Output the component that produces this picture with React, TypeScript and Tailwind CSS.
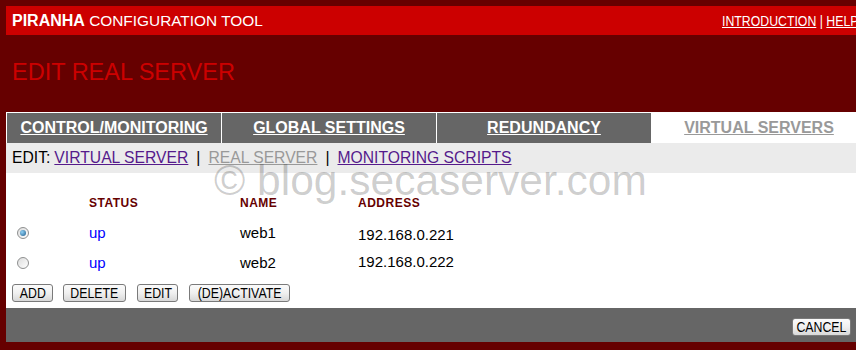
import React from "react";

function Radio({ checked }: { checked?: boolean }) {
  return (
    <span className="flex h-[12px] w-[12px] items-center justify-center rounded-full border border-[#8e8f8f] bg-linear-to-br from-[#dcdcdc] to-[#ffffff]">
      {checked && (
        <span className="h-[6px] w-[6px] rounded-full bg-[radial-gradient(circle_at_35%_35%,#8fd0f5,#1f5d8c)]" />
      )}
    </span>
  );
}

function Btn({ label, w, cls }: { label: string; w: string; cls?: string }) {
  return (
    <button
      className={`flex h-[18px] items-center justify-center overflow-hidden whitespace-nowrap rounded-[3px] border border-[#7a7a7a] bg-linear-to-b from-[#fbfbfb] via-[#f0f0f0] to-[#d8d8d8] text-[14px] leading-none text-black ${w} ${cls ?? ""}`}
    >
      <span className="inline-block scale-x-[0.88]">{label}</span>
    </button>
  );
}

export default function App() {
  const rows = [
    { checked: true, status: "up", name: "web1", addr: "192.168.0.221", addrCls: "pt-[5px]" },
    { checked: false, status: "up", name: "web2", addr: "192.168.0.222", addrCls: "pb-[2px]" },
  ];
  return (
    <div className="relative h-[350px] w-[856px] overflow-hidden bg-[#660000] pl-[6px] pt-[6px] font-['Liberation_Sans',Arial,sans-serif]">
      {/* header bar */}
      <div className="flex h-[29px] items-center overflow-hidden bg-[#cc0000] text-white">
        <div className="w-[716px] shrink-0 whitespace-nowrap pl-[6px] text-[16px] leading-none">
          <span className="font-bold">PIRANHA</span>
          <span className="text-[15.4px]"> CONFIGURATION TOOL</span>
        </div>
        <div className="shrink-0 origin-left scale-x-[0.82] whitespace-nowrap text-[15px] leading-none">
          <span className="underline">INTRODUCTION</span>
          <span> | </span>
          <span className="underline">HELP</span>
        </div>
      </div>

      {/* page title */}
      <div className="h-[77px] pl-[6px] pt-[23px]">
        <div className="text-[23.5px] leading-[28px] text-[#cc0000]">EDIT REAL SERVER</div>
      </div>

      {/* tabs */}
      <div className="bg-white pl-px pt-px">
        <div className="flex h-[30px] gap-px">
          {["CONTROL/MONITORING", "GLOBAL SETTINGS", "REDUNDANCY"].map((t) => (
            <div
              key={t}
              className="flex w-[214px] shrink-0 items-center justify-center bg-[#666666] text-[16px] font-bold text-white underline"
            >
              {t}
            </div>
          ))}
          <div className="flex w-[214px] shrink-0 items-center justify-center bg-white text-[16px] font-bold text-[#999999] underline">
            VIRTUAL SERVERS
          </div>
        </div>
      </div>

      {/* edit row */}
      <div className="flex h-[30px] items-center whitespace-nowrap bg-[#ebebeb] pl-[6px] text-[15.7px] text-black">
        <span>EDIT:</span>
        <span className="ml-[4px] text-[#551a8b] underline">VIRTUAL SERVER</span>
        <span className="mx-[8px]">|</span>
        <span className="text-[#999999] underline">REAL SERVER</span>
        <span className="mx-[8px]">|</span>
        <span className="text-[#551a8b] underline">MONITORING SCRIPTS</span>
      </div>

      {/* content */}
      <div className="h-[135px] bg-white pt-[15px]">
        <div className="flex h-[30px] items-center text-[12px] font-bold tracking-[0.5px] text-[#660000]">
          <div className="w-[83px] shrink-0" />
          <div className="w-[151px] shrink-0">STATUS</div>
          <div className="w-[118px] shrink-0">NAME</div>
          <div>ADDRESS</div>
        </div>
        {rows.map((r) => (
          <div key={r.name} className="flex h-[30px] items-center text-[15px] text-black">
            <div className="w-[83px] shrink-0 pl-[11px]">
              <Radio checked={r.checked} />
            </div>
            <div className="w-[151px] shrink-0 text-[#0000ff]">{r.status}</div>
            <div className="w-[118px] shrink-0">{r.name}</div>
            <div className={r.addrCls}>{r.addr}</div>
          </div>
        ))}
        <div className="mt-[6px] flex pl-[6px]">
          <Btn label="ADD" w="w-[41px]" />
          <Btn label="DELETE" w="w-[63px]" cls="ml-[10px]" />
          <Btn label="EDIT" w="w-[41px]" cls="ml-[11px]" />
          <Btn label="(DE)ACTIVATE" w="w-[101px]" cls="ml-[11px]" />
        </div>
      </div>

      {/* bottom bar */}
      <div className="flex h-[34px] items-start justify-end bg-[#666666] pr-[5px] pt-[10px]">
        <Btn label="CANCEL" w="w-[59px]" />
      </div>

      {/* watermark */}
      <div className="pointer-events-none absolute left-[214px] top-[160px] whitespace-nowrap text-[42.5px] leading-[42px] text-black/[0.2]">
        © blog.secaserver.com
      </div>
    </div>
  );
}
